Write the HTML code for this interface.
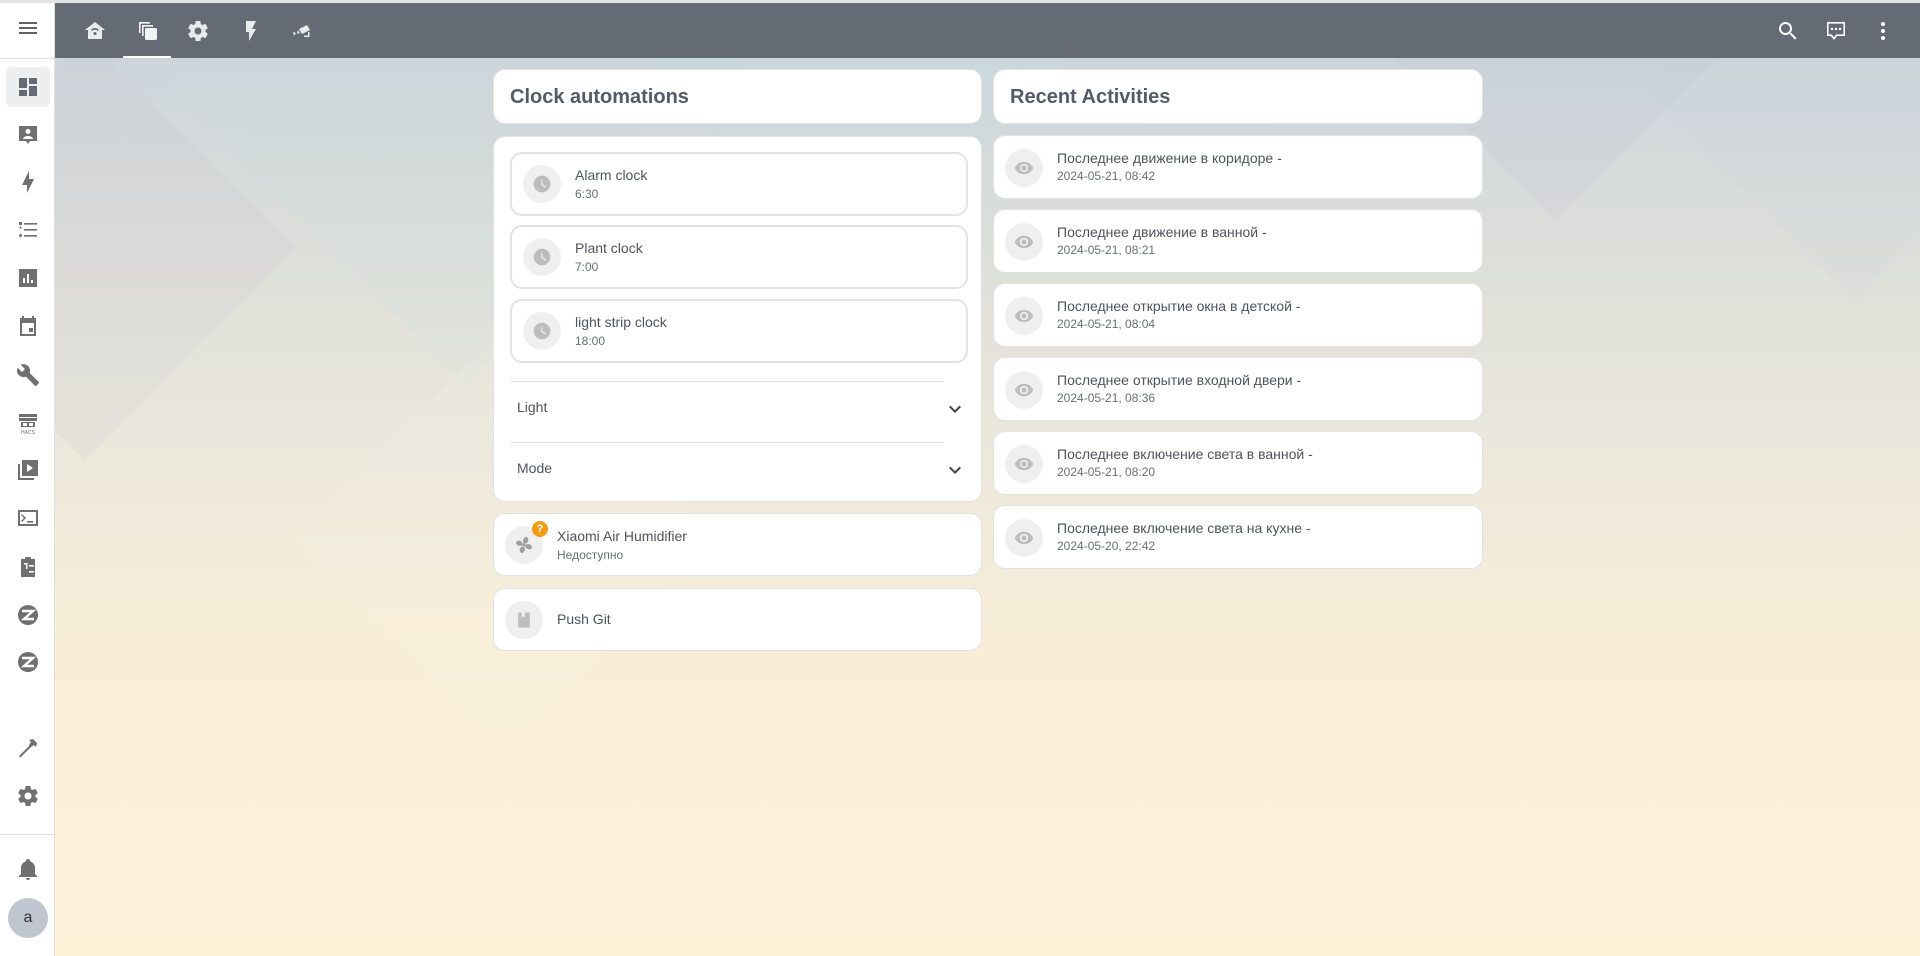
<!DOCTYPE html>
<html><head><meta charset="utf-8"><style>
*{box-sizing:border-box;margin:0;padding:0}
body{width:1920px;height:956px;overflow:hidden;font-family:"Liberation Sans","DejaVu Sans",sans-serif;background:#fdf1d9;position:relative;color:#5f6368}
.bg{position:absolute;left:55px;top:58px;right:0;bottom:0;background:linear-gradient(180deg,#cdd5db 0%,#dfe0da 25%,#ece8dc 45%,#f8eed8 65%,#fdf1d8 100%);overflow:hidden}
.dm{position:absolute;transform:rotate(45deg);}
.top{position:absolute;left:55px;top:3px;right:0;height:55px;background:#646b75}
.topline{position:absolute;left:0;top:0;width:1920px;height:3px;background:#e4e4e4}
.side{position:absolute;left:0;top:3px;width:55px;bottom:0;background:#fff;border-right:1px solid #e0e0e0}
.ic{position:absolute;width:24px;height:24px}
.card{position:absolute;background:#fff;border-radius:12px;border:1px solid #e2e2e2}
.title{font-size:20px;font-weight:bold;color:#555b62;position:absolute;left:16px;top:16px}
.tile{position:absolute;left:16px;width:458px;height:64px;border:2px solid #e3e3e3;border-radius:12px;background:#fff}
.circ{position:absolute;width:38px;height:38px;border-radius:50%;background:#efefef}
.circ svg{position:absolute;left:9px;top:9px;width:20px;height:20px}
.nm{position:absolute;font-size:14px;color:#4f545a}
.sb{position:absolute;font-size:12px;color:#6a6e73}
</style></head><body>
<div class="topline"></div>
<div class="bg">
<div class="dm" style="left:200px;top:-180px;width:420px;height:420px;background:rgba(200,220,220,.15)"></div>
<div class="dm" style="left:-120px;top:40px;width:300px;height:300px;background:rgba(200,195,210,.15)"></div>
<div class="dm" style="left:650px;top:-150px;width:300px;height:300px;background:rgba(190,225,225,.15)"></div>
<div class="dm" style="left:1350px;top:-200px;width:300px;height:300px;background:rgba(195,195,215,.18)"></div>
<div class="dm" style="left:1650px;top:-120px;width:300px;height:300px;background:rgba(200,210,220,.15)"></div>
<div class="dm" style="left:300px;top:330px;width:300px;height:300px;background:rgba(255,250,235,.12)"></div>
</div>
<div class="top">
<svg class="ic" style="left:28px;top:16px" viewBox="0 0 24 24" fill="#e8eaed"><path d="M12 3L2 11h3v9h14v-9h3L12 3zm0 6a5 5 0 0 1 4 2l-1.2 1a3.5 3.5 0 0 0-5.6 0L8 11a5 5 0 0 1 4-2zm0 4a1.5 1.5 0 1 1 0 3 1.5 1.5 0 0 1 0-3z"/></svg>
<svg class="ic" style="left:81px;top:16px" viewBox="0 0 24 24" fill="#f2f3f4"><path d="M3 3h11v1.6H4.6V14H3zM6 6h11v1.6H7.6V17H6z"/><rect x="9" y="9" width="12" height="12" rx="1.5"/></svg>
<div style="position:absolute;left:68px;top:53px;width:48px;height:2px;background:#fff"></div>
<svg class="ic" style="left:131px;top:16px" viewBox="0 0 24 24" fill="#e8eaed"><path d="M12,15.5A3.5,3.5 0 0,1 8.5,12A3.5,3.5 0 0,1 12,8.5A3.5,3.5 0 0,1 15.5,12A3.5,3.5 0 0,1 12,15.5M19.43,12.97C19.47,12.65 19.5,12.33 19.5,12C19.5,11.67 19.47,11.34 19.43,11L21.54,9.37C21.73,9.22 21.78,8.95 21.66,8.73L19.66,5.27C19.54,5.05 19.27,4.96 19.05,5.05L16.56,6.05C16.04,5.66 15.5,5.32 14.87,5.07L14.5,2.42C14.46,2.18 14.25,2 14,2H10C9.75,2 9.54,2.18 9.5,2.42L9.13,5.07C8.5,5.32 7.96,5.66 7.44,6.05L4.95,5.05C4.73,4.96 4.46,5.05 4.34,5.27L2.34,8.73C2.21,8.95 2.27,9.22 2.46,9.37L4.57,11C4.53,11.34 4.5,11.67 4.5,12C4.5,12.33 4.53,12.65 4.57,12.97L2.46,14.63C2.27,14.78 2.21,15.05 2.34,15.27L4.34,18.730C4.46,18.95 4.73,19.03 4.95,18.95L7.44,17.94C7.96,18.34 8.5,18.68 9.13,18.93L9.5,21.58C9.54,21.82 9.75,22 10,22H14C14.25,22 14.46,21.82 14.5,21.58L14.87,18.93C15.5,18.67 16.04,18.34 16.56,17.94L19.05,18.95C19.27,19.03 19.54,18.95 19.66,18.73L21.66,15.27C21.78,15.05 21.73,14.78 21.54,14.63L19.43,12.97Z"/></svg>
<svg class="ic" style="left:184px;top:16px" viewBox="0 0 24 24" fill="#e8eaed"><path d="M7,2V13H10V22L17,10H13L17,2H7Z"/></svg>
<svg class="ic" style="left:234px;top:16px" viewBox="0 0 24 24" fill="#e8eaed"><path d="M18 6l3 5-8 4-3-5zM9 11l2 3-3 1zM4 13l3 1-2 3zM19 13h1.5v5H15v-1.5h4z"/></svg>
<svg class="ic" style="left:1721px;top:16px" viewBox="0 0 24 24" fill="#fff"><path d="M9.5,3A6.5,6.5 0 0,1 16,9.5C16,11.11 15.41,12.59 14.44,13.73L14.71,14H15.5L20.5,19L19,20.5L14,15.5V14.71L13.73,14.44C12.59,15.41 11.11,16 9.5,16A6.5,6.5 0 0,1 3,9.5A6.5,6.5 0 0,1 9.5,3M9.5,5C7,5 5,7 5,9.5C5,12 7,14 9.5,14C12,14 14,12 14,9.5C14,7 12,5 9.5,5Z"/></svg>
<svg class="ic" style="left:1769px;top:16px" viewBox="0 0 24 24" fill="#fff"><path d="M3 3h18v14h-8l-3 4-3-4H3zM4.6 4.6v10.8h3.2l2.2 3 2.2-3h7.2V4.6z"/><circle cx="8" cy="10" r="1.2"/><circle cx="12" cy="10" r="1.2"/><circle cx="16" cy="10" r="1.2"/></svg>
<svg class="ic" style="left:1816px;top:16px" viewBox="0 0 24 24" fill="#fff"><circle cx="12" cy="5" r="2"/><circle cx="12" cy="12" r="2"/><circle cx="12" cy="19" r="2"/></svg>
</div>
<div class="side">
<div style="position:absolute;left:0;top:55px;width:55px;height:1px;background:#e0e0e0"></div>
<div style="position:absolute;left:6px;top:64px;width:44px;height:40px;border-radius:6px;background:#eceef0"></div>
<div style="position:absolute;left:0;top:831px;width:55px;height:1px;background:#e0e0e0"></div>
<svg class="ic" style="left:16px;top:13px" viewBox="0 0 24 24" fill="#5f6368"><path d="M3,6H21V8H3V6M3,11H21V13H3V11M3,16H21V18H3V16Z"/></svg>
<svg class="ic" style="left:16px;top:72px" viewBox="0 0 24 24" fill="#646b75"><path d="M13,3V9H21V3M13,21H21V11H13M3,21H11V15H3M3,13H11V3H3V13Z"/></svg>
<svg class="ic" style="left:16px;top:120px" viewBox="0 0 24 24" fill="#707070"><path d="M3 3h18v15h-7l-2 3-2-3H3zM12 6a2.5 2.5 0 1 0 0 5 2.5 2.5 0 0 0 0-5zM7 16h10c0-2-3-3-5-3s-5 1-5 3z"/></svg>
<svg class="ic" style="left:16px;top:167px" viewBox="0 0 24 24" fill="#707070"><path d="M11 15H6l7-14v8h5l-7 14z"/></svg>
<svg class="ic" style="left:16px;top:215px" viewBox="0 0 24 24" fill="#707070"><path d="M3 4h3v3H3zM8 5h13v1.6H8zM3 10.5l1.5-2.5 1.5 2.5zM8 11h13v1.6H8zM4.5 16a1.5 1.5 0 1 1 0 3 1.5 1.5 0 0 1 0-3zM8 17h13v1.6H8z"/></svg>
<svg class="ic" style="left:16px;top:263px" viewBox="0 0 24 24" fill="#707070"><path d="M3 3h18v18H3zM7 12v5h2v-5zM11 8v9h2V8zM15 14v3h2v-3z"/></svg>
<svg class="ic" style="left:16px;top:312px" viewBox="0 0 24 24" fill="#707070"><path d="M6 1h2v2h8V1h2v2h2v18H4V3h2zM6 8v11h12V8zM13 13h4v4h-4z"/></svg>
<svg class="ic" style="left:16px;top:360px" viewBox="0 0 24 24" fill="#707070"><path d="M22.7,19L13.6,9.9C14.5,7.6 14,4.9 12.1,3C10.1,1 7.1,0.6 4.7,1.7L9,6L6,9L1.6,4.7C0.4,7.1 0.9,10.1 2.9,12.1C4.8,14 7.5,14.5 9.8,13.6L18.9,22.7C19.3,23.1 19.9,23.1 20.3,22.7L22.6,20.4C23.1,20 23.1,19.3 22.7,19Z"/></svg>
<svg class="ic" style="left:16px;top:409px" viewBox="0 0 24 24" fill="#707070"><path d="M3 2h18v3H3zM3 6h18v3H3zM5 10h14v5H5zM7 11v3h4v-3zM13 11v3h4v-3z"/><text x="12" y="22" font-size="5" text-anchor="middle" font-family="Liberation Sans" fill="#707070">HACS</text></svg>
<svg class="ic" style="left:16px;top:455px" viewBox="0 0 24 24" fill="#707070"><path d="M2 6h2v14h14v2H2zM6 2h16v16H6zM11 6v8l6-4z"/></svg>
<svg class="ic" style="left:16px;top:503px" viewBox="0 0 24 24" fill="#707070"><path d="M2 4h20v16H2zM4 6v12h16V6zM6 8l4 4-4 4-1-1 3-3-3-3zM11 15h6v1.6h-6z"/></svg>
<svg class="ic" style="left:16px;top:552px" viewBox="0 0 24 24" fill="#707070"><path d="M9 2h6v2h4v18H5V4h4zM8 8v1.5h2V14h1.5V8zM13 10v1.6h5V10zM8 16h3v1.5H8zM13 16v1.6h5V16z"/></svg>
<svg class="ic" style="left:16px;top:600px" viewBox="0 0 24 24"><circle cx="12" cy="12" r="10" fill="#707070"/><path d="M6 8h11L8 16h10" stroke="#fff" stroke-width="2.4" fill="none"/></svg>
<svg class="ic" style="left:16px;top:647px" viewBox="0 0 24 24"><circle cx="12" cy="12" r="10" fill="#707070"/><path d="M6 8h11L8 16h10" stroke="#fff" stroke-width="2.4" fill="none"/></svg>
<svg class="ic" style="left:16px;top:733px" viewBox="0 0 24 24" fill="#707070"><path d="M3 20l11-11 1.5 1.5L4.5 21.5zM13 4l4-1 4 4-1 4-2-2-3 2-2-2 2-3z"/></svg>
<svg class="ic" style="left:16px;top:781px" viewBox="0 0 24 24" fill="#707070"><path d="M12,15.5A3.5,3.5 0 0,1 8.5,12A3.5,3.5 0 0,1 12,8.5A3.5,3.5 0 0,1 15.5,12A3.5,3.5 0 0,1 12,15.5M19.43,12.97C19.47,12.65 19.5,12.33 19.5,12C19.5,11.67 19.47,11.34 19.43,11L21.54,9.37C21.73,9.22 21.78,8.95 21.66,8.73L19.66,5.27C19.54,5.05 19.27,4.96 19.05,5.05L16.56,6.05C16.04,5.66 15.5,5.32 14.87,5.07L14.5,2.42C14.46,2.18 14.25,2 14,2H10C9.75,2 9.54,2.18 9.5,2.42L9.13,5.07C8.5,5.32 7.96,5.66 7.44,6.05L4.95,5.05C4.73,4.96 4.46,5.05 4.34,5.27L2.34,8.73C2.21,8.95 2.27,9.22 2.46,9.37L4.57,11C4.53,11.34 4.5,11.67 4.5,12C4.5,12.33 4.53,12.65 4.57,12.97L2.46,14.63C2.27,14.78 2.21,15.05 2.34,15.27L4.34,18.73C4.46,18.95 4.73,19.03 4.95,18.95L7.44,17.94C7.96,18.34 8.5,18.68 9.13,18.93L9.5,21.58C9.54,21.82 9.75,22 10,22H14C14.25,22 14.46,21.82 14.5,21.58L14.87,18.93C15.5,18.67 16.04,18.34 16.56,17.94L19.05,18.95C19.27,19.03 19.54,18.95 19.66,18.73L21.66,15.27C21.78,15.05 21.73,14.78 21.54,14.63L19.43,12.97Z"/></svg>
<svg class="ic" style="left:16px;top:854px" viewBox="0 0 24 24" fill="#707070"><path d="M21,19V20H3V19L5,17V11C5,7.9 7.03,5.17 10,4.29C10,4.19 10,4.1 10,4A2,2 0 0,1 12,2A2,2 0 0,1 14,4C14,4.1 14,4.19 14,4.29C16.97,5.17 19,7.9 19,11V17L21,19M14,21A2,2 0 0,1 12,23A2,2 0 0,1 10,21"/></svg>
<div style="position:absolute;left:8px;top:895px;width:40px;height:40px;border-radius:50%;background:#c0c6cf;text-align:center;line-height:40px;font-size:16px;color:#333">a</div>
</div>

<div class="card" style="left:493px;top:69px;width:489px;height:55px"><div class="title">Clock automations</div></div>
<div class="card" style="left:493px;top:136px;width:489px;height:366px">
 <div class="tile" style="top:15px"><div class="circ" style="left:11px;top:11px"><svg viewBox="0 0 24 24" fill="#bdbdbd"><path d="M12,2A10,10 0 0,0 2,12A10,10 0 0,0 12,22A10,10 0 0,0 22,12A10,10 0 0,0 12,2M16.2,16.2L11,13V7H12.5V12.2L17,14.9L16.2,16.2Z"/></svg></div><div class="nm" style="left:63px;top:13px">Alarm clock</div><div class="sb" style="left:63px;top:33px">6:30</div></div>
 <div class="tile" style="top:88px"><div class="circ" style="left:11px;top:11px"><svg viewBox="0 0 24 24" fill="#bdbdbd"><path d="M12,2A10,10 0 0,0 2,12A10,10 0 0,0 12,22A10,10 0 0,0 22,12A10,10 0 0,0 12,2M16.2,16.2L11,13V7H12.5V12.2L17,14.9L16.2,16.2Z"/></svg></div><div class="nm" style="left:63px;top:13px">Plant clock</div><div class="sb" style="left:63px;top:33px">7:00</div></div>
 <div class="tile" style="top:162px"><div class="circ" style="left:11px;top:11px"><svg viewBox="0 0 24 24" fill="#bdbdbd"><path d="M12,2A10,10 0 0,0 2,12A10,10 0 0,0 12,22A10,10 0 0,0 22,12A10,10 0 0,0 12,2M16.2,16.2L11,13V7H12.5V12.2L17,14.9L16.2,16.2Z"/></svg></div><div class="nm" style="left:63px;top:13px">light strip clock</div><div class="sb" style="left:63px;top:33px">18:00</div></div>
 <div style="position:absolute;left:16px;top:244px;width:434px;height:1px;background:#e0e0e0"></div>
 <div class="nm" style="left:23px;top:262px">Light</div>
 <svg class="ic" style="left:449px;top:260px" viewBox="0 0 24 24" fill="#444"><path d="M7.41,8.58L12,13.17L16.59,8.58L18,10L12,16L6,10L7.41,8.58Z"/></svg>
 <div style="position:absolute;left:16px;top:305px;width:434px;height:1px;background:#e0e0e0"></div>
 <div class="nm" style="left:23px;top:323px">Mode</div>
 <svg class="ic" style="left:449px;top:321px" viewBox="0 0 24 24" fill="#444"><path d="M7.41,8.58L12,13.17L16.59,8.58L18,10L12,16L6,10L7.41,8.58Z"/></svg>
</div>
<div class="card" style="left:493px;top:513px;width:489px;height:63px">
 <div class="circ" style="left:11px;top:12px"><svg viewBox="0 0 24 24" fill="#9e9e9e"><circle cx="12" cy="12" r="2"/><ellipse cx="12" cy="6" rx="3" ry="4" transform="rotate(20 12 12)"/><ellipse cx="12" cy="6" rx="3" ry="4" transform="rotate(110 12 12)"/><ellipse cx="12" cy="6" rx="3" ry="4" transform="rotate(200 12 12)"/><ellipse cx="12" cy="6" rx="3" ry="4" transform="rotate(290 12 12)"/></svg></div>
 <div style="position:absolute;left:38px;top:7px;width:16px;height:16px;border-radius:50%;background:#f39c12;color:#fff;font-size:11px;font-weight:bold;text-align:center;line-height:16px">?</div>
 <div class="nm" style="left:63px;top:14px">Xiaomi Air Humidifier</div><div class="sb" style="left:63px;top:34px">Недоступно</div>
</div>
<div class="card" style="left:493px;top:588px;width:489px;height:63px">
 <div class="circ" style="left:11px;top:12px"><svg viewBox="0 0 24 24" fill="#bdbdbd"><path d="M5 3h14v18H5zM9 3v6l2-1.5 2 1.5V3z" fill-rule="evenodd"/></svg></div>
 <div class="nm" style="left:63px;top:22px">Push Git</div>
</div>

<div class="card" style="left:993px;top:69px;width:490px;height:55px"><div class="title">Recent Activities</div></div>
<div class="card" style="left:993px;top:135px;width:490px;height:64px"><div class="circ" style="left:11px;top:13px"><svg viewBox="0 0 24 24" fill="#bdbdbd"><path d="M12,9A3,3 0 0,0 9,12A3,3 0 0,0 12,15A3,3 0 0,0 15,12A3,3 0 0,0 12,9M12,17A5,5 0 0,1 7,12A5,5 0 0,1 12,7A5,5 0 0,1 17,12A5,5 0 0,1 12,17M12,4.5C7,4.5 2.73,7.61 1,12C2.73,16.39 7,19.5 12,19.5C17,19.5 21.27,16.39 23,12C21.27,7.61 17,4.5 12,4.5Z"/></svg></div><div class="nm" style="left:63px;top:14px">Последнее движение в коридоре -</div><div class="sb" style="left:63px;top:33px">2024-05-21, 08:42</div></div>
<div class="card" style="left:993px;top:209px;width:490px;height:64px"><div class="circ" style="left:11px;top:13px"><svg viewBox="0 0 24 24" fill="#bdbdbd"><path d="M12,9A3,3 0 0,0 9,12A3,3 0 0,0 12,15A3,3 0 0,0 15,12A3,3 0 0,0 12,9M12,17A5,5 0 0,1 7,12A5,5 0 0,1 12,7A5,5 0 0,1 17,12A5,5 0 0,1 12,17M12,4.5C7,4.5 2.73,7.61 1,12C2.73,16.39 7,19.5 12,19.5C17,19.5 21.27,16.39 23,12C21.27,7.61 17,4.5 12,4.5Z"/></svg></div><div class="nm" style="left:63px;top:14px">Последнее движение в ванной -</div><div class="sb" style="left:63px;top:33px">2024-05-21, 08:21</div></div>
<div class="card" style="left:993px;top:283px;width:490px;height:64px"><div class="circ" style="left:11px;top:13px"><svg viewBox="0 0 24 24" fill="#bdbdbd"><path d="M12,9A3,3 0 0,0 9,12A3,3 0 0,0 12,15A3,3 0 0,0 15,12A3,3 0 0,0 12,9M12,17A5,5 0 0,1 7,12A5,5 0 0,1 12,7A5,5 0 0,1 17,12A5,5 0 0,1 12,17M12,4.5C7,4.5 2.73,7.61 1,12C2.73,16.39 7,19.5 12,19.5C17,19.5 21.27,16.39 23,12C21.27,7.61 17,4.5 12,4.5Z"/></svg></div><div class="nm" style="left:63px;top:14px">Последнее открытие окна в детской -</div><div class="sb" style="left:63px;top:33px">2024-05-21, 08:04</div></div>
<div class="card" style="left:993px;top:357px;width:490px;height:64px"><div class="circ" style="left:11px;top:13px"><svg viewBox="0 0 24 24" fill="#bdbdbd"><path d="M12,9A3,3 0 0,0 9,12A3,3 0 0,0 12,15A3,3 0 0,0 15,12A3,3 0 0,0 12,9M12,17A5,5 0 0,1 7,12A5,5 0 0,1 12,7A5,5 0 0,1 17,12A5,5 0 0,1 12,17M12,4.5C7,4.5 2.73,7.61 1,12C2.73,16.39 7,19.5 12,19.5C17,19.5 21.27,16.39 23,12C21.27,7.61 17,4.5 12,4.5Z"/></svg></div><div class="nm" style="left:63px;top:14px">Последнее открытие входной двери -</div><div class="sb" style="left:63px;top:33px">2024-05-21, 08:36</div></div>
<div class="card" style="left:993px;top:431px;width:490px;height:64px"><div class="circ" style="left:11px;top:13px"><svg viewBox="0 0 24 24" fill="#bdbdbd"><path d="M12,9A3,3 0 0,0 9,12A3,3 0 0,0 12,15A3,3 0 0,0 15,12A3,3 0 0,0 12,9M12,17A5,5 0 0,1 7,12A5,5 0 0,1 12,7A5,5 0 0,1 17,12A5,5 0 0,1 12,17M12,4.5C7,4.5 2.73,7.61 1,12C2.73,16.39 7,19.5 12,19.5C17,19.5 21.27,16.39 23,12C21.27,7.61 17,4.5 12,4.5Z"/></svg></div><div class="nm" style="left:63px;top:14px">Последнее включение света в ванной -</div><div class="sb" style="left:63px;top:33px">2024-05-21, 08:20</div></div>
<div class="card" style="left:993px;top:505px;width:490px;height:64px"><div class="circ" style="left:11px;top:13px"><svg viewBox="0 0 24 24" fill="#bdbdbd"><path d="M12,9A3,3 0 0,0 9,12A3,3 0 0,0 12,15A3,3 0 0,0 15,12A3,3 0 0,0 12,9M12,17A5,5 0 0,1 7,12A5,5 0 0,1 12,7A5,5 0 0,1 17,12A5,5 0 0,1 12,17M12,4.5C7,4.5 2.73,7.61 1,12C2.73,16.39 7,19.5 12,19.5C17,19.5 21.27,16.39 23,12C21.27,7.61 17,4.5 12,4.5Z"/></svg></div><div class="nm" style="left:63px;top:14px">Последнее включение света на кухне -</div><div class="sb" style="left:63px;top:33px">2024-05-20, 22:42</div></div>
</body></html>
